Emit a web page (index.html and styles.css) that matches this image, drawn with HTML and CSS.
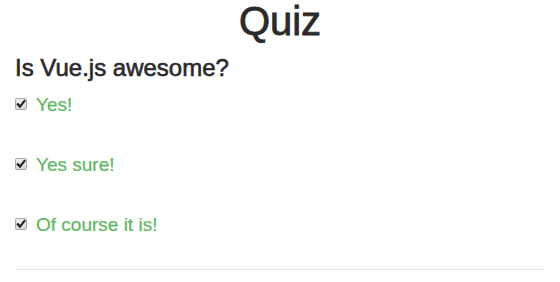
FILE: index.html
```html
<!DOCTYPE html>
<html>
<head>
<meta charset="utf-8">
<link rel="stylesheet" href="styles.css">
</head>
<body>
<div class="container">
  <h1 class="title">Quiz</h1>
  <h3 class="question">Is Vue.js awesome?</h3>
  <div class="options">
    <label class="option">
      <span class="box"><svg viewBox="0 0 12 12" width="12" height="12"><path d="M2.8 6.2 L5 8.6 L9.4 3" fill="none" stroke="#222" stroke-width="2.2" stroke-linecap="square"/></svg></span>
      <span class="text">Yes!</span>
    </label>
    <label class="option">
      <span class="box"><svg viewBox="0 0 12 12" width="12" height="12"><path d="M2.8 6.2 L5 8.6 L9.4 3" fill="none" stroke="#222" stroke-width="2.2" stroke-linecap="square"/></svg></span>
      <span class="text">Yes sure!</span>
    </label>
    <label class="option">
      <span class="box"><svg viewBox="0 0 12 12" width="12" height="12"><path d="M2.8 6.2 L5 8.6 L9.4 3" fill="none" stroke="#222" stroke-width="2.2" stroke-linecap="square"/></svg></span>
      <span class="text">Of course it is!</span>
    </label>
  </div>
  <hr class="rule">
</div>
</body>
</html>
```
FILE: styles.css
```css
html, body {
  margin: 0;
  padding: 0;
  background: #fff;
}
body {
  font-family: "Liberation Sans", Arial, sans-serif;
  color: #333;
}
.container {
  padding: 0 15px;
  display: flex;
  flex-direction: column;
}
.title {
  margin: 0;
  font-size: 40px;
  line-height: 42px;
  font-weight: 500;
  text-align: center;
  color: #2a2a2a;
  -webkit-text-stroke: 0.8px #2a2a2a;
}
.question {
  margin: 12px 0 0;
  font-size: 24px;
  line-height: 28px;
  font-weight: 500;
  color: #2a2a2a;
  -webkit-text-stroke: 0.6px #2a2a2a;
}
.options {
  display: flex;
  flex-direction: column;
  gap: 36px;
  margin-top: 11px;
}
.option {
  display: flex;
  align-items: flex-start;
  gap: 9px;
  height: 24px;
}
.box {
  width: 12px;
  height: 12px;
  margin-top: 5px;
  box-sizing: border-box;
  border: 1px solid #a8a8a8;
  border-radius: 2px;
  background: linear-gradient(#f2f2f2, #d6d6d6);
  display: flex;
  align-items: center;
  justify-content: center;
  overflow: hidden;
}
.box svg {
  display: block;
  flex: none;
}
.text {
  font-size: 19px;
  line-height: 24px;
  color: #5cb85c;
  -webkit-text-stroke: 0.2px #5cb85c;
}
.rule {
  margin: 32px 0 0;
  border: 0;
  border-top: 1px solid #e5e5e5;
  height: 0;
}
```
